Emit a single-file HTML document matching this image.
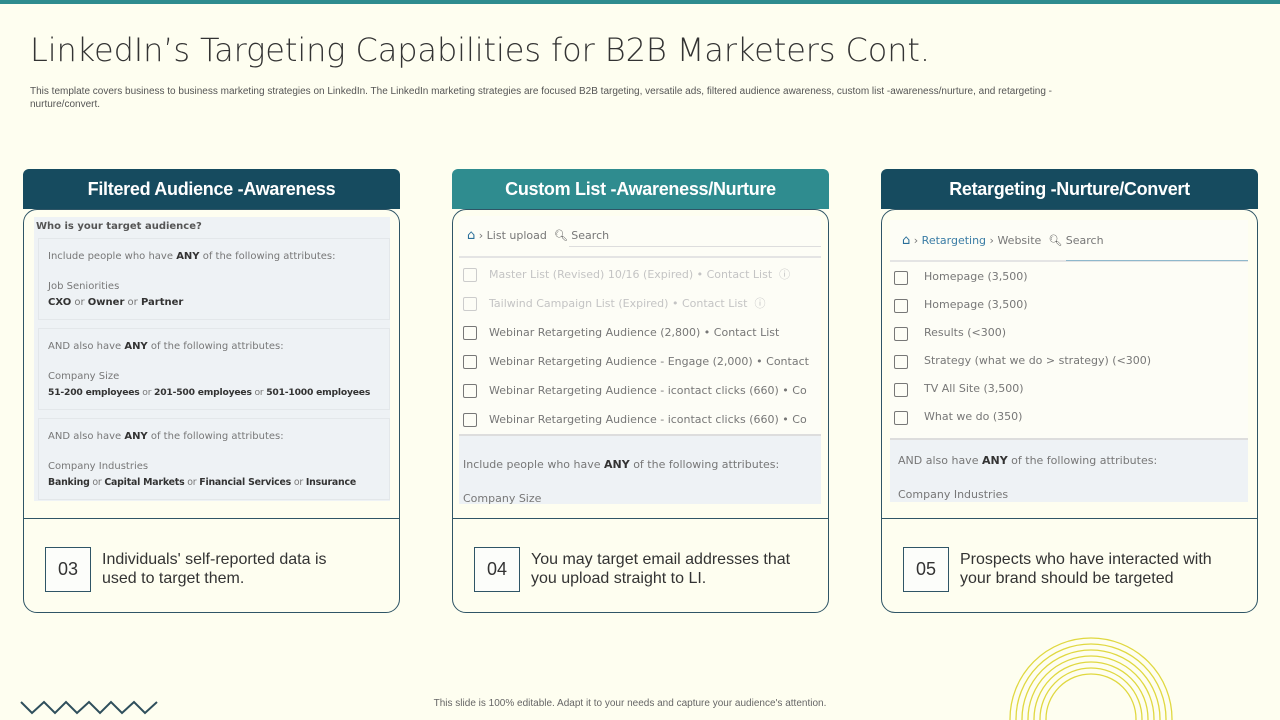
<!DOCTYPE html>
<html><head><meta charset="utf-8"><style>
*{margin:0;padding:0;box-sizing:border-box}
html,body{overflow:hidden}
body{width:1280px;height:720px;background:#fefef0;position:relative;font-family:"Liberation Sans",sans-serif}
.a{position:absolute}
.hd{position:absolute;top:169px;height:40px;width:377px;border-radius:6px 6px 0 0;color:#fff;font-weight:bold;font-size:18px;text-align:center;line-height:40px;letter-spacing:-0.3px}
.bd{position:absolute;top:209px;height:404px;width:377px;border:1px solid #2f5566;border-radius:14px;}
.dv{position:absolute;left:0;right:0;top:308px;border-top:1px solid #2f5566}
.num{position:absolute;left:21px;top:337px;width:46px;height:45px;border:1px solid #2f5566;background:#fcfdfa;font-size:18px;color:#333;text-align:center;line-height:43px}
.tx{position:absolute;left:78px;top:340px;font-size:16px;color:#333;line-height:19px}
.ss{position:absolute;font-family:"DejaVu Sans",sans-serif;font-size:10.5px;color:#777;overflow:hidden}
.ss b{color:#333}
.box{background:#eef2f5;border:1px solid #e3e7ea;margin:0 0 8px 0;padding:10px 9px;white-space:nowrap;overflow:hidden}
.row{height:29px;line-height:29px;white-space:nowrap;position:relative;padding-left:30px}
.row:before{content:"";position:absolute;left:4px;top:8px;width:12px;height:12px;border:1.4px solid #777;border-radius:2px}
.row.dim{color:#c4c4c4}.row.dim:before{border-color:#ccc}
</style></head><body>
<div class="a" style="left:0;top:0;width:1280px;height:4px;background:#2f8c8f"></div>
<div class="a" style="left:30px;top:31px;font-size:32px;color:#333;font-family:'DejaVu Sans',sans-serif;font-weight:200;letter-spacing:-0.1px;white-space:nowrap">LinkedIn’s Targeting Capabilities for B2B Marketers Cont.</div>
<div class="a" style="left:30px;top:85px;width:1045px;font-size:10px;color:#555;line-height:13px">This template covers business to business marketing strategies on LinkedIn. The LinkedIn marketing strategies are focused B2B targeting, versatile ads, filtered audience awareness, custom list -awareness/nurture, and retargeting -nurture/convert.</div>

<!-- card 1 -->
<div class="hd" style="left:23px;background:#164b5f">Filtered Audience -Awareness</div>
<div class="bd" style="left:23px">
 <div class="ss" style="left:10px;top:7px;width:356px;height:284px;background:#eef2f5;font-size:10px">
  <div style="padding:4px 2px 6px;font-weight:bold;color:#555">Who is your target audience?</div>
  <div class="box" style="height:82px;margin-left:4px;line-height:16px">Include people who have <b>ANY</b> of the following attributes:<br><div style="height:14px"></div>Job Seniorities<br><b>CXO</b> or <b>Owner</b> or <b>Partner</b></div>
  <div class="box" style="height:82px;margin-left:4px;line-height:16px">AND also have <b>ANY</b> of the following attributes:<br><div style="height:14px"></div>Company Size<br><span style="font-size:9.2px;letter-spacing:-0.2px"><b>51-200 employees</b> or <b>201-500 employees</b> or <b>501-1000 employees</b></span></div>
  <div class="box" style="height:82px;margin-left:4px;line-height:16px">AND also have <b>ANY</b> of the following attributes:<br><div style="height:14px"></div>Company Industries<br><span style="font-size:9.4px;letter-spacing:-0.2px"><b>Banking</b> or <b>Capital Markets</b> or <b>Financial Services</b> or <b>Insurance</b></span></div>
 </div>
 <div class="dv"></div>
 <div class="num">03</div>
 <div class="tx">Individuals' self-reported data is<br>used to target them.</div>
</div>

<!-- card 2 -->
<div class="hd" style="left:452px;background:#2f8c8f">Custom List -Awareness/Nurture</div>
<div class="bd" style="left:452px">
 <div class="ss" style="left:6px;top:6px;width:362px;height:288px;background:#fdfdf6;font-size:11px">
  <div style="height:40px;line-height:40px;padding-left:8px;color:#777"><span style="color:#2a6f9a;font-size:13px">⌂</span> › List upload &nbsp;<span style="color:#555">&#x1F50D;&#xFE0E;</span> Search</div>
  <div style="position:absolute;left:110px;right:0;top:30px;border-top:1px solid #ddd"></div>
  <div style="border-top:2px solid #e4e4e4;padding-top:2px">
  <div class="row dim">Master List (Revised) 10/16 (Expired) • Contact List &nbsp;ⓘ</div>
  <div class="row dim">Tailwind Campaign List (Expired) • Contact List &nbsp;ⓘ</div>
  <div class="row">Webinar Retargeting Audience (2,800) • Contact List</div>
  <div class="row">Webinar Retargeting Audience - Engage (2,000) • Contact</div>
  <div class="row">Webinar Retargeting Audience - icontact clicks (660) • Co</div>
  <div class="row">Webinar Retargeting Audience - icontact clicks (660) • Co</div>
  </div>
  <div style="position:absolute;left:0;right:0;top:218px;bottom:0;background:#eef2f5;border-top:2px solid #ddd;padding:12px 4px;line-height:34px">Include people who have <b>ANY</b> of the following attributes:<br>Company Size</div>
 </div>
 <div class="dv"></div>
 <div class="num">04</div>
 <div class="tx">You may target email addresses that<br>you upload straight to LI.</div>
</div>

<!-- card 3 -->
<div class="hd" style="left:881px;background:#164b5f">Retargeting -Nurture/Convert</div>
<div class="bd" style="left:881px">
 <div class="ss" style="left:8px;top:10px;width:358px;height:282px;background:#fdfdf6;font-size:11px">
  <div style="height:40px;line-height:42px;padding-left:12px;color:#777"><span style="color:#2a6f9a;font-size:13px">⌂</span> › <span style="color:#3a7ca5">Retargeting</span> › Website &nbsp;<span style="color:#555">&#x1F50D;&#xFE0E;</span> Search</div>
  <div style="position:absolute;left:176px;right:0;top:40px;border-top:1.5px solid #8fb8cc"></div>
  <div style="border-top:2px solid #e4e4e4;margin-top:0;padding-top:1px">
  <div class="row" style="height:28px;line-height:28px;padding-left:34px">Homepage (3,500)</div>
  <div class="row" style="height:28px;line-height:28px;padding-left:34px">Homepage (3,500)</div>
  <div class="row" style="height:28px;line-height:28px;padding-left:34px">Results (&lt;300)</div>
  <div class="row" style="height:28px;line-height:28px;padding-left:34px">Strategy (what we do &gt; strategy) (&lt;300)</div>
  <div class="row" style="height:28px;line-height:28px;padding-left:34px">TV All Site (3,500)</div>
  <div class="row" style="height:28px;line-height:28px;padding-left:34px">What we do (350)</div>
  </div>
  <div style="position:absolute;left:0;right:0;top:218px;bottom:0;background:#eef2f5;border-top:2px solid #ddd;padding:4px 8px;line-height:34px">AND also have <b>ANY</b> of the following attributes:<br>Company Industries</div>
 </div>
 <div class="dv"></div>
 <div class="num">05</div>
 <div class="tx">Prospects who have interacted with<br>your brand should be targeted</div>
</div>

<div class="a" style="left:0;width:1280px;top:698px;text-align:center;font-size:10px;color:#666;padding-right:20px">This slide is 100% editable. Adapt it to your needs and capture your audience's attention.</div>

<svg class="a" style="left:0;top:690px" width="200" height="30"><polyline points="21,12 32,23 44,12 55,23 66,12 77,23 89,12 100,23 111,12 122,23 134,12 145,23 157,12" fill="none" stroke="#2f4f5c" stroke-width="2"/></svg>
<svg class="a" style="left:1000px;top:630px" width="190" height="90" fill="none" stroke="#e0d840" stroke-width="1.3">
<circle cx="91" cy="89" r="81"/><circle cx="91" cy="89" r="75"/><circle cx="91" cy="89" r="69"/><circle cx="91" cy="89" r="63"/><circle cx="91" cy="89" r="57"/><circle cx="91" cy="89" r="51"/><circle cx="91" cy="89" r="45"/>
</svg>
</body></html>
